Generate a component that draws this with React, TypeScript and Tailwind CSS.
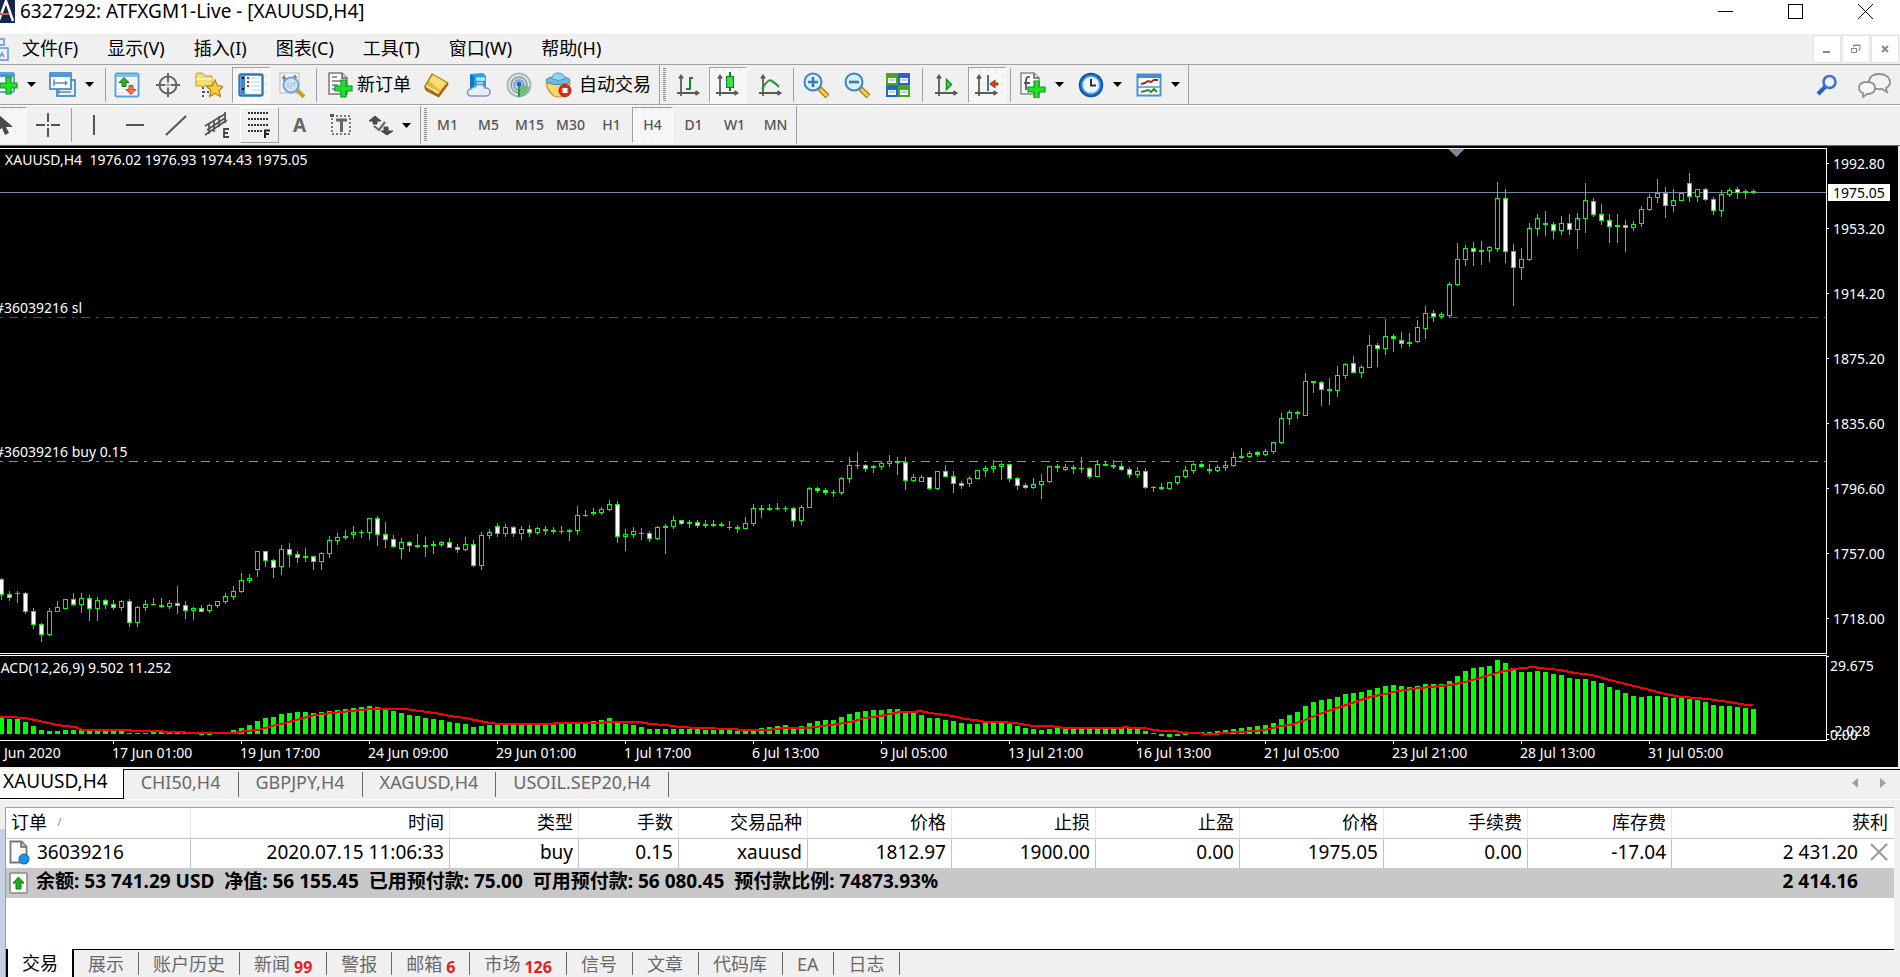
import type { ReactNode } from 'react';

// high, body top, body bottom, low, 1 = bearish (filled)
type Candle = [number, number, number, number, number];

const candles: Candle[] = [
  [578, 579, 595, 600, 1], [591, 594, 598, 601, 1], [591, 593, 594, 603, 0], [592, 593, 612, 614, 1],
  [608, 611, 625, 629, 1], [623, 624, 635, 642, 1], [608, 611, 635, 636, 0], [601, 607, 612, 612, 0],
  [599, 599, 609, 609, 0], [593, 599, 605, 606, 1], [593, 598, 605, 613, 0], [595, 598, 609, 621, 1],
  [597, 600, 609, 621, 0], [599, 600, 605, 609, 1], [600, 604, 608, 610, 1], [600, 601, 608, 611, 0],
  [599, 601, 623, 627, 1], [606, 607, 623, 627, 0], [600, 604, 608, 611, 0], [598, 604, 605, 605, 0],
  [598, 605, 607, 608, 0], [600, 603, 607, 609, 0], [586, 603, 606, 614, 1], [601, 605, 611, 619, 1],
  [607, 608, 611, 620, 0], [605, 608, 612, 612, 1], [604, 605, 611, 613, 0], [601, 601, 606, 608, 0],
  [593, 596, 602, 604, 0], [586, 591, 597, 600, 0], [573, 580, 592, 593, 0], [574, 578, 581, 583, 0],
  [551, 551, 570, 577, 0], [551, 551, 561, 567, 1], [559, 560, 568, 578, 1], [545, 549, 567, 575, 0],
  [543, 549, 555, 567, 1], [551, 554, 558, 563, 1], [548, 556, 558, 562, 0], [556, 556, 562, 570, 1],
  [552, 553, 562, 570, 0], [536, 540, 554, 558, 0], [533, 537, 541, 545, 0], [530, 536, 538, 540, 0],
  [526, 532, 535, 539, 0], [530, 532, 533, 538, 0], [518, 518, 533, 540, 0], [516, 518, 535, 546, 1],
  [522, 534, 540, 548, 1], [535, 539, 547, 548, 1], [538, 542, 549, 559, 0], [541, 542, 546, 552, 1],
  [534, 545, 547, 548, 0], [537, 545, 547, 557, 0], [541, 544, 546, 554, 0], [541, 542, 545, 547, 0],
  [538, 542, 548, 548, 1], [544, 547, 550, 553, 1], [537, 544, 550, 551, 0], [540, 544, 566, 567, 1],
  [532, 535, 566, 570, 0], [529, 532, 536, 539, 0], [523, 526, 534, 537, 1], [524, 527, 534, 537, 0],
  [526, 527, 534, 537, 1], [526, 529, 534, 540, 0], [525, 529, 533, 537, 1], [527, 528, 533, 535, 0],
  [526, 529, 531, 535, 0], [527, 530, 532, 534, 0], [526, 531, 532, 534, 0], [529, 530, 532, 541, 0],
  [506, 515, 531, 535, 0], [510, 515, 516, 517, 0], [508, 512, 514, 516, 0], [507, 509, 513, 515, 0],
  [500, 504, 510, 511, 0], [501, 504, 537, 543, 1], [529, 534, 537, 551, 0], [527, 531, 535, 538, 0],
  [528, 533, 534, 540, 0], [531, 533, 539, 542, 1], [526, 527, 539, 540, 0], [524, 526, 528, 554, 0],
  [516, 520, 527, 529, 0], [520, 520, 524, 525, 1], [520, 522, 524, 528, 0], [520, 522, 526, 528, 1],
  [520, 524, 526, 528, 0], [520, 524, 526, 527, 0], [522, 524, 526, 527, 0], [521, 527, 528, 530, 0],
  [525, 527, 529, 533, 0], [517, 523, 529, 529, 0], [504, 508, 524, 526, 0], [505, 508, 510, 518, 0],
  [504, 508, 510, 511, 0], [503, 508, 509, 510, 0], [506, 508, 509, 512, 0], [507, 508, 521, 527, 1],
  [505, 507, 521, 525, 0], [487, 488, 508, 508, 0], [487, 488, 491, 493, 1], [488, 490, 493, 495, 1],
  [490, 492, 493, 497, 0], [477, 478, 493, 495, 0], [457, 465, 479, 483, 0], [452, 465, 466, 469, 0],
  [464, 465, 469, 472, 1], [465, 466, 468, 473, 0], [461, 463, 467, 470, 0], [455, 461, 464, 467, 0],
  [457, 461, 463, 475, 0], [457, 462, 481, 490, 1], [474, 477, 481, 482, 0], [475, 477, 482, 482, 0],
  [477, 477, 489, 490, 1], [471, 471, 489, 490, 0], [465, 471, 477, 477, 1], [471, 476, 484, 493, 1],
  [481, 483, 486, 489, 1], [476, 478, 484, 487, 0], [470, 470, 479, 479, 0], [466, 468, 471, 477, 0],
  [460, 466, 469, 473, 0], [463, 464, 467, 480, 0], [464, 464, 479, 482, 1], [477, 478, 486, 490, 1],
  [483, 485, 488, 489, 1], [478, 484, 488, 489, 0], [474, 481, 485, 499, 0], [466, 466, 482, 483, 0],
  [464, 466, 468, 472, 0], [464, 467, 470, 471, 0], [465, 467, 469, 474, 0], [457, 468, 469, 473, 0],
  [467, 468, 477, 479, 1], [460, 464, 477, 477, 0], [462, 464, 466, 466, 0], [460, 465, 467, 469, 0],
  [463, 466, 470, 471, 1], [467, 469, 475, 478, 1], [467, 471, 475, 478, 0], [468, 471, 488, 489, 1],
  [486, 487, 488, 492, 0], [483, 487, 489, 490, 0], [482, 482, 489, 490, 0], [476, 476, 483, 485, 0],
  [466, 470, 477, 478, 0], [463, 464, 471, 474, 0], [463, 464, 467, 468, 1], [464, 469, 471, 474, 0],
  [465, 467, 471, 472, 0], [462, 465, 468, 471, 0], [452, 457, 466, 467, 0], [448, 456, 458, 459, 0],
  [451, 453, 457, 458, 0], [451, 452, 455, 457, 1], [449, 451, 455, 456, 0], [442, 442, 452, 454, 0],
  [413, 418, 443, 444, 0], [410, 412, 419, 425, 0], [411, 412, 414, 419, 0], [373, 381, 416, 416, 0],
  [381, 381, 383, 393, 0], [381, 382, 390, 406, 1], [378, 389, 391, 405, 0], [366, 375, 391, 397, 0],
  [363, 364, 376, 379, 0], [356, 363, 373, 373, 1], [365, 367, 373, 378, 0], [335, 345, 368, 368, 0],
  [343, 345, 349, 367, 1], [319, 336, 349, 355, 0], [334, 336, 339, 352, 1], [332, 340, 344, 348, 1],
  [333, 342, 344, 347, 0], [320, 327, 342, 343, 0], [306, 313, 329, 339, 0], [310, 313, 317, 322, 1],
  [312, 314, 317, 319, 0], [282, 284, 316, 318, 0], [243, 259, 285, 286, 0], [245, 248, 260, 266, 0],
  [242, 248, 252, 266, 1], [241, 250, 252, 265, 0], [246, 247, 251, 262, 0], [182, 198, 249, 252, 0],
  [189, 198, 252, 263, 1], [244, 251, 268, 306, 1], [248, 259, 268, 280, 0], [223, 228, 260, 261, 0],
  [214, 218, 229, 236, 0], [211, 223, 225, 236, 0], [222, 224, 231, 239, 1], [216, 223, 231, 235, 0],
  [214, 223, 230, 235, 1], [213, 218, 230, 249, 0], [183, 200, 219, 233, 0], [198, 201, 215, 217, 1],
  [204, 214, 221, 225, 1], [214, 220, 227, 243, 1], [214, 225, 227, 243, 0], [220, 225, 228, 252, 1],
  [221, 224, 228, 231, 0], [206, 209, 224, 227, 0], [194, 197, 210, 211, 0], [179, 193, 198, 203, 0],
  [187, 193, 206, 218, 1], [189, 200, 206, 212, 0], [192, 193, 201, 201, 0], [173, 183, 197, 202, 1],
  [189, 189, 197, 202, 0], [188, 189, 200, 201, 1], [197, 199, 211, 215, 1], [190, 194, 211, 217, 0],
  [188, 190, 195, 197, 0], [187, 189, 193, 199, 1], [189, 191, 193, 199, 0], [189, 191, 193, 194, 0],
];

const macd = [
  16, 15, 15, 12, 8, 4, 3, 3, 4, 4, 5, 4, 3, 3, 3, 3, 1, 1, 1, 2, 2, 1, 1, 1, 0, -1, -1, 0, 1, 4,
  6, 9, 13, 16, 17, 20, 21, 22, 22, 21, 22, 23, 24, 25, 26, 27, 28, 27, 24, 23, 21, 19, 18, 16, 15, 14, 12, 11, 10, 7,
  8, 9, 9, 9, 9, 9, 9, 9, 9, 9, 10, 10, 10, 10, 13, 14, 16, 12, 10, 9, 7, 5, 5, 5, 5, 5, 5, 5, 4, 4,
  4, 4, 3, 3, 4, 6, 7, 8, 9, 7, 8, 11, 13, 14, 14, 17, 20, 22, 23, 24, 24, 25, 25, 21, 21, 19, 16, 16, 14, 13,
  11, 10, 10, 11, 11, 11, 10, 8, 6, 5, 4, 5, 6, 6, 6, 6, 6, 6, 6, 6, 7, 6, 5, 3, 1, -2, -3, -2, -1, 1,
  2, 2, 3, 4, 5, 6, 7, 8, 9, 11, 15, 19, 22, 28, 32, 34, 35, 37, 40, 41, 42, 44, 46, 48, 49, 48, 47, 48, 50, 50,
  50, 53, 58, 63, 66, 67, 68, 74, 71, 66, 62, 62, 63, 62, 60, 59, 56, 55, 55, 53, 51, 47, 44, 41, 38, 37, 38, 38, 37, 36,
  36, 35, 34, 32, 29, 28, 28, 27, 26, 25,
];

const signal =
  '0,717 9,717 25,718 40,721 57,725 75,727 83,730 100,730 128,730 135,731 160,731 165,732 184,732 187,733 235,733 245,731 258,730 272,726 285,723 300,719 315,715 333,713 350,711 370,709 385,709 405,709 420,711 435,713 450,716 465,718 480,721 490,723 500,724 553,724 556,723 600,723 606,722 640,722 650,724 665,725 680,727 697,728 735,729 740,730 768,730 775,729 785,728 808,728 815,727 830,725 845,723 855,721 865,718 880,716 890,714 900,712 913,712 920,711 930,713 938,714 953,716 965,719 975,720 985,722 1000,722 1015,723 1033,726 1050,726 1065,728 1120,728 1125,727 1132,728 1145,728 1153,730 1165,731 1175,731 1185,733 1200,733 1204,734 1215,734 1222,733 1240,732 1255,731 1270,729 1280,726 1290,725 1300,722 1310,718 1325,712 1340,707 1355,702 1370,697 1385,694 1393,692 1405,690 1420,688 1440,686 1450,685 1465,682 1480,678 1500,672 1515,669 1533,667 1540,668 1560,670 1575,673 1592,675 1610,680 1630,685 1650,690 1665,694 1682,697 1697,698 1715,700 1735,703 1747,705 1753,705';

const times = [
  '17 Jun 01:00', '19 Jun 17:00', '24 Jun 09:00', '29 Jun 01:00', '1 Jul 17:00', '6 Jul 13:00', '9 Jul 05:00',
  '13 Jul 21:00', '16 Jul 13:00', '21 Jul 05:00', '23 Jul 21:00', '28 Jul 13:00', '31 Jul 05:00',
];

const prices = ['1992.80', '1953.20', '1914.20', '1875.20', '1835.60', '1796.60', '1757.00', '1718.00'];

const menus = ['文件(F)', '显示(V)', '插入(I)', '图表(C)', '工具(T)', '窗口(W)', '帮助(H)'];
const periods = ['M1', 'M5', 'M15', 'M30', 'H1', 'H4', 'D1', 'W1', 'MN'];
const chartTabs = ['XAUUSD,H4', 'CHI50,H4', 'GBPJPY,H4', 'XAGUSD,H4', 'USOIL.SEP20,H4'];

const terminalTabs = [
  { label: '交易' },
  { label: '展示' },
  { label: '账户历史' },
  { label: '新闻', count: 99 },
  { label: '警报' },
  { label: '邮箱', count: 6 },
  { label: '市场', count: 126 },
  { label: '信号' },
  { label: '文章' },
  { label: '代码库' },
  { label: 'EA' },
  { label: '日志' },
];

const UI = 'font-["Noto_Sans","Noto_Sans_CJK_SC",sans-serif]';
const HATCH = 'bg-[repeating-conic-gradient(#ffffff_0_25%,#f0f0f0_0_50%)] bg-[length:2px_2px]';

function Icon({ children, w = 26, className = '' }: { children: ReactNode; w?: number; className?: string }) {
  return (
    <svg width={w} height={26} viewBox={`0 0 ${w} 26`} fill="none" className={`shrink-0 ${className}`}>
      {children}
    </svg>
  );
}

/* ---------- toolbar icons ---------- */

const greenPlus = (x: number, y: number) => (
  <path
    d={`M${x + 6} ${y}h5v6h6v5h-6v6h-5v-6h-6v-5h6z`}
    fill="#22e02c"
    stroke="#0a9a18"
    strokeWidth="1.2"
  />
);

const NewChartIcon = () => (
  <Icon className="-ml-[8px]">
    <rect x="1" y="1" width="21" height="19" rx="1" fill="#fff" stroke="#3b87c8" strokeWidth="1.5" />
    <path d="M1 2h21v3H1z" fill="#4a98d8" />
    {greenPlus(8, 5)}
  </Icon>
);

const ProfilesIcon = () => (
  <Icon w={28}>
    <rect x="8" y="8" width="18" height="16" fill="#e6f1fb" stroke="#3b7fc0" strokeWidth="1.6" />
    <rect x="1" y="1" width="21" height="16" fill="#fff" stroke="#3b7fc0" strokeWidth="1.6" />
    <path d="M1 2h21v3H1z" fill="#4a98d8" />
    <path d="M5 7v7M4 11h14M16 9l2 2-2 2M10 18v4M9 20h13" stroke="#6b8aa8" strokeWidth="1.400" />
  </Icon>
);

const MarketWatchIcon = () => (
  <Icon>
    <rect x="1.500" y="1.500" width="23" height="23" rx="1.500" fill="#fff" stroke="#5a9fd6" strokeWidth="2" />
    <path d="M2 2h22v3H2z" fill="#7cc0ee" />
    <path d="M14 8h8M14 12h8M4 17h7M4 21h7" stroke="#c5d4e2" strokeDasharray="2 1" />
    <path d="M10 5.500l5 5h-3v4H8v-4H5z" fill="#2cb02c" stroke="#138013" />
    <path d="M17 22.500l-5-5h3v-4h4v4h3z" fill="#f0744a" stroke="#c63c14" />
  </Icon>
);

const DataWindowIcon = () => (
  <Icon>
    <circle cx="13" cy="13" r="8.500" stroke="#666" strokeWidth="2" />
    <path d="M13 1v9M13 16v9M1 13h9M16 13h9" stroke="#666" strokeWidth="2" />
    <path d="M10 13h6M13 10v6" stroke="#999" />
  </Icon>
);

const NavigatorIcon = () => (
  <Icon w={28}>
    <path d="M1 3q0-2 2-2h4l3 3h7v10H1z" fill="#f6dc74" stroke="#c59a25" />
    <path d="M1.500 7h15" stroke="#fff3b8" strokeWidth="2" />
    <path d="M8 15v10M8 20h6" stroke="#555" strokeWidth="2" strokeDasharray="2 2" />
    <path d="M20 8l2.600 5.700 6 .6-4.500 4.200 1.300 6-5.400-3-5.400 3 1.300-6-4.500-4.200 6-.6z" fill="#f8cd45" stroke="#b98310" strokeWidth="1.200" />
  </Icon>
);

const TerminalIcon = () => (
  <Icon>
    <rect x="1.500" y="2.500" width="23" height="21" rx="1.500" fill="#fff" stroke="#2f78bd" strokeWidth="2.400" />
    <path d="M3 4h4v18H3z" fill="#3c88cf" />
    <path d="M4 6h2M4 17h2" stroke="#111" strokeWidth="2" />
    <path d="M9 6h2M9 10h2M9 14h2" stroke="#e02020" strokeWidth="2" />
    <path d="M13 6h9M13 10h9M13 14h9M13 18h9" stroke="#dce6f4" strokeWidth="2" />
  </Icon>
);

const TesterIcon = () => (
  <Icon w={28}>
    <rect x="2" y="1" width="19" height="20" fill="#f6f6f6" stroke="#b9b9b9" />
    <path d="M6 3v9M4 6h4M11 5v6M17 3v9M15 5h4" stroke="#777" strokeWidth="1.500" />
    <path d="M19 18l7 7" stroke="#d29a22" strokeWidth="4" />
    <circle cx="13" cy="13" r="7.500" fill="#cfe6fa" fillOpacity=".9" stroke="#6fa5dc" strokeWidth="2" />
    <path d="M10 16v-5M13 17v-7M16 15v-5" stroke="#8fb3d6" />
  </Icon>
);

const NewOrderIcon = () => (
  <Icon>
    <path d="M2 1h13l5 5v16H2z" fill="#fafafa" stroke="#777" strokeWidth="1.500" />
    <path d="M15 1v5h5" fill="#ddd" stroke="#666" strokeWidth="1.500" />
    <path d="M5 5h5M5 9h11M5 13h6M5 17h4" stroke="#777" strokeWidth="1.600" />
    {greenPlus(8, 8)}
  </Icon>
);

const MetaEditorIcon = () => (
  <Icon>
    <path d="M8 2l16 9-9 13L1 14z" fill="#e8b62e" stroke="#a8700f" strokeWidth="1.200" />
    <path d="M9 3l14 8-7 7L5 9z" fill="#f9dc78" />
    <path d="M1.500 14c0 3 1 4 3 5l10 5 9-12" stroke="#a8650c" strokeWidth="2.400" />
    <path d="M2 14l13 7" stroke="#fff2b8" strokeWidth="1.500" />
  </Icon>
);

const CloudIcon = () => (
  <Icon>
    <path d="M5 2l13-1 3 3v12H5z" fill="#1da0f2" />
    <path d="M5 2l4 3v12H5z" fill="#1277c8" />
    <path d="M12 6h7v2h-7zM12 11h6" stroke="#c9ebff" strokeWidth="1.500" fill="#7fd0ff" />
    <path d="M6 24h15a4 4 0 0 0 0-8h-1a5.500 5.500 0 0 0-10-1 4.500 4.500 0 0 0-4 2 3.500 3.500 0 0 0 0 7z" fill="#e6eefa" stroke="#7e95bd" strokeWidth="1.500" />
  </Icon>
);

const SignalIcon = () => (
  <Icon>
    <circle cx="13" cy="13" r="11.500" fill="#e4eae6" stroke="#a9bab2" strokeWidth="2" />
    <circle cx="13" cy="13" r="8" fill="#d2dde0" stroke="#8fa6ae" strokeWidth="1.800" />
    <circle cx="13" cy="13" r="5" fill="#c5d6ea" stroke="#7298c2" strokeWidth="1.500" />
    <path d="M13 12l11 3q-2 9-11 10z" fill="#5fb565" fillOpacity=".75" />
    <path d="M13 13v12" stroke="#2f9a3c" strokeWidth="2" />
    <circle cx="13" cy="12" r="2.500" fill="#2465c4" />
  </Icon>
);

const AutoTradingIcon = () => (
  <Icon w={28}>
    <path d="M1 11q2 9 8 13 5 2 10 0l6-13z" fill="#f6d968" stroke="#c2952a" strokeWidth="1.200" />
    <ellipse cx="13" cy="8.500" rx="12" ry="4" fill="#6bbbe2" stroke="#3a88b4" />
    <path d="M7 7q0-6 6-6t7 6q-7 3-13 0z" fill="#93d4f0" stroke="#4a98c2" />
    <circle cx="20" cy="18.500" r="6" fill="#e0301c" stroke="#a81507" />
    <rect x="17.500" y="16" width="5" height="5" fill="#fff" />
  </Icon>
);

const Axes = () => (
  <path d="M5 4v20M1 21h21M3 6.500L5 3.500l2 3M19.500 19l3 2-3 2" stroke="#5a5a5a" strokeWidth="1.800" />
);

const BarChartIcon = () => (
  <Icon>
    <Axes />
    <path d="M14 5v13M14 6h3M10 17h4" stroke="#198a24" strokeWidth="2" />
  </Icon>
);

const CandleChartIcon = () => (
  <Icon>
    <Axes />
    <path d="M15 0v19" stroke="#11801c" strokeWidth="2" />
    <rect x="11.500" y="4.500" width="7" height="11" fill="#35e045" stroke="#11801c" />
  </Icon>
);

const LineChartIcon = () => (
  <Icon>
    <Axes />
    <path d="M4 17Q10 7 13 8.500T21 15" stroke="#2c8f36" strokeWidth="2" />
  </Icon>
);

const ZoomIcon = ({ plus = false }: { plus?: boolean }) => (
  <Icon>
    <path d="M16.500 16.500l8 8" stroke="#a77c14" strokeWidth="5.500" />
    <path d="M17 17l7 7" stroke="#f3cf4c" strokeWidth="3" />
    <circle cx="10" cy="10" r="8.500" fill="#d7f0fb" stroke="#3b84c6" strokeWidth="2" />
    <path d={plus ? 'M5 10h10M10 5v10' : 'M5 10h10'} stroke="#3a78a8" strokeWidth="2.600" />
  </Icon>
);

const TileIcon = () => (
  <Icon>
    <path d="M1 1h12v12H1zM13 13h12v12H13z" fill="#4aa816" />
    <path d="M13 1h12v12H13zM1 13h12v12H1z" fill="#2a62cf" />
    <path d="M3 6h8v5H3zM15 6h8v5h-8zM3 18h8v5H3zM15 18h8v5h-8z" fill="#f4f8ff" />
    <path d="M4 8h6M16 8h6M4 20h6M16 20h6" stroke="#a9c0dc" strokeWidth="1.500" />
  </Icon>
);

const AutoScrollIcon = () => (
  <Icon>
    <Axes />
    <path d="M12.500 7.500v10l5-5z" fill="#4be05a" stroke="#138a20" strokeWidth="1.500" />
  </Icon>
);

const ChartShiftIcon = () => (
  <Icon>
    <Axes />
    <path d="M14 3v16" stroke="#2f78b0" strokeWidth="2" />
    <path d="M16 12l5-4v3h3v2h-3v3z" fill="#d2421a" stroke="#b0300c" />
  </Icon>
);

const IndicatorsIcon = () => (
  <Icon>
    <path d="M1 1h13l5 5v16H1z" fill="#fafafa" stroke="#888" strokeWidth="1.500" />
    <path d="M14 1v5h5" fill="#ddd" stroke="#666" strokeWidth="1.500" />
    <path d="M10 5q-4-1-4 4v9M4 11h6" stroke="#555" strokeWidth="1.800" />
    {greenPlus(8, 9)}
  </Icon>
);

const ClockIcon = () => (
  <Icon>
    <circle cx="13" cy="13" r="11.500" fill="#1f78d4" stroke="#0f4f9e" strokeWidth="1.500" />
    <circle cx="13" cy="13" r="8.500" fill="#eef6fd" stroke="#7fb6ec" />
    <path d="M13 7v6.500h5" stroke="#333" strokeWidth="2" />
    <path d="M13 5.500v1M13 19.500v1M5.500 13h1M19.500 13h1" stroke="#888" />
  </Icon>
);

const TemplatesIcon = () => (
  <Icon>
    <rect x="1.500" y="2.500" width="23" height="21" fill="#fff" stroke="#4a93d2" strokeWidth="2" />
    <path d="M1 2h24v4H1z" fill="#3f8fd6" />
    <path d="M2 15h22" stroke="#4a93d2" strokeWidth="1.500" />
    <path d="M5 12l4-1 3-2 3 1 3-2h4" stroke="#9a2a18" strokeWidth="2" />
    <path d="M5 20l4-1 3-1 3 2 3-3 3 3" stroke="#25902f" strokeWidth="2" />
  </Icon>
);

/* ---------- drawing icons ---------- */

const CursorIcon = () => (
  <Icon className="-ml-[8px]">
    <path d="M5 1v19l5-4 3 7 4-2-3-6h7z" fill="#4a4a4a" />
  </Icon>
);

const CrossIcon = () => (
  <Icon>
    <path d="M13 1v9M13 16v9M1 13h9M16 13h9" stroke="#555" strokeWidth="2" />
    <path d="M12 13h2" stroke="#555" strokeWidth="2" />
  </Icon>
);

const VLineIcon = () => <Icon><path d="M13 3v20" stroke="#555" strokeWidth="2" /></Icon>;
const HLineIcon = () => <Icon><path d="M4 13h18" stroke="#555" strokeWidth="2" /></Icon>;
const TrendIcon = () => <Icon><path d="M3 23L23 4" stroke="#555" strokeWidth="2" /></Icon>;

const ChannelIcon = () => (
  <Icon>
    <path d="M1 14L21 2M1 23L23 8M5 12v10M10 9v11M15 4v11M21 0v11M3 18L21 6" stroke="#555" strokeWidth="1.800" />
    <path d="M25 17h-5v8h5M20 21h4" stroke="#444" strokeWidth="1.800" />
  </Icon>
);

const FiboIcon = () => (
  <Icon>
    <path d="M1 1h21M1 7h21M1 13h21M1 19h14" stroke="#333" strokeWidth="2" strokeDasharray="2 1" />
    <path d="M23 18.500h-5V26M18 22h4" stroke="#222" strokeWidth="2" />
  </Icon>
);

const LabelIcon = () => (
  <Icon>
    <rect x="4" y="4" width="18" height="18" stroke="#777" strokeWidth="2" strokeDasharray="2 2" />
    <path d="M8 8h11M13.500 8v12" stroke="#666" strokeWidth="3" />
    <path d="M2 2h4v3H2z" fill="#555" />
  </Icon>
);

const ArrowsIcon = () => (
  <Icon>
    <path d="M7 4l6 5H9v3H5V9H1zM19 23l-6-4h3v-4h4v4h5z" fill="#4a4a4a" stroke="#4a4a4a" />
    <path d="M6 14l5 4 6-8" stroke="#666" strokeWidth="2.200" />
  </Icon>
);

/* ---------- toolbar parts ---------- */

const Caret = ({ label, className = '' }: { label: string; className?: string }) => (
  <button aria-label={label} className={`flex h-9 w-3 items-center justify-center ${className}`}>
    <svg width="9" height="5" viewBox="0 0 9 5">
      <path d="M0 0h9L4.500 5z" fill="#000" />
    </svg>
  </button>
);

const Sep = ({ className = '' }: { className?: string }) => (
  <span className={`h-[34px] w-px shrink-0 bg-[#a0a0a0] ${className}`} />
);

const Grip = ({ className = '' }: { className?: string }) => (
  <span
    className={`ml-[3px] h-[34px] w-[3px] shrink-0 bg-[repeating-linear-gradient(#8c8c8c_0_1px,#f0f0f0_1px_2px)] ${className}`}
  />
);

interface ToolProps {
  label: string;
  children: ReactNode;
  className?: string;
  pressed?: boolean;
}

function Tool({ label, children, className = 'w-[41px]', pressed = false }: ToolProps) {
  return (
    <button
      aria-label={label}
      aria-pressed={pressed}
      className={`flex h-9 shrink-0 items-center justify-center ${
        pressed ? `border border-t-[#a0a0a0] border-r-white border-b-white border-l-[#a0a0a0] ${HATCH}` : ''
      } ${className}`}
    >
      {children}
    </button>
  );
}

function StandardToolbar() {
  return (
    <div className="flex h-10 shrink-0 items-center border-b border-[#a0a0a0]">
      <div className="flex h-full items-center border-r border-[#a0a0a0]">
        <Tool label="新图表" className="w-[25px] !justify-start"><NewChartIcon /></Tool>
        <Caret label="新图表菜单" />
        <Tool label="配置文件" className="ml-[6px] w-10"><ProfilesIcon /></Tool>
        <Caret label="配置文件菜单" />
        <Sep className="ml-[10px]" />
        <Tool label="市场报价"><MarketWatchIcon /></Tool>
        <Tool label="数据窗口"><DataWindowIcon /></Tool>
        <Tool label="导航"><NavigatorIcon /></Tool>
        <Tool label="终端" pressed className="mr-px ml-[3px] w-[38px]"><TerminalIcon /></Tool>
        <Tool label="策略测试"><TesterIcon /></Tool>
        <Sep className="mr-[10px] ml-[4px]" />
        <button className="mr-[5px] flex h-9 items-center gap-1 text-[18px]">
          <NewOrderIcon />
          新订单
        </button>
        <Tool label="MetaEditor"><MetaEditorIcon /></Tool>
        <Tool label="虚拟主机"><CloudIcon /></Tool>
        <Tool label="信号"><SignalIcon /></Tool>
        <button className="mr-[8px] ml-[6px] flex h-9 items-center gap-[6px] text-[18px]">
          <AutoTradingIcon />
          自动交易
        </button>
      </div>
      <div className="flex h-full items-center border-r border-[#a0a0a0]">
        <Grip className="mr-[2px]" />
        <Tool label="柱状图"><BarChartIcon /></Tool>
        <Tool label="阴阳烛" pressed className="w-[38px]"><CandleChartIcon /></Tool>
        <Tool label="折线图" className="ml-[3px] w-[41px]"><LineChartIcon /></Tool>
        <Sep className="mr-px ml-[2px]" />
        <Tool label="放大"><ZoomIcon plus /></Tool>
        <Tool label="缩小"><ZoomIcon /></Tool>
        <Tool label="平铺窗口"><TileIcon /></Tool>
        <Sep className="mr-[3px] ml-[4px]" />
        <Tool label="自动滚动"><AutoScrollIcon /></Tool>
        <Tool label="图表平移" pressed className="ml-px w-[38px]"><ChartShiftIcon /></Tool>
        <Sep className="mr-[3px] ml-[4px]" />
        <Tool label="技术指标" className="w-[38px]"><IndicatorsIcon /></Tool>
        <Caret label="技术指标菜单" className="ml-px" />
        <Tool label="周期" className="ml-[6px] w-10"><ClockIcon /></Tool>
        <Caret label="周期菜单" />
        <Tool label="模板" className="ml-[6px] w-10"><TemplatesIcon /></Tool>
        <Caret label="模板菜单" className="mr-[7px]" />
      </div>
      <div className="ml-auto flex items-center gap-[20px] pr-[8px]">
        <button aria-label="搜索">
          <svg width="22" height="22" viewBox="0 0 22 22" fill="none">
            <path d="M9 13l-7 7" stroke="#2c5fc4" strokeWidth="4" />
            <circle cx="13.500" cy="8" r="6" fill="#eef3fc" stroke="#3f6fd0" strokeWidth="2.500" />
          </svg>
        </button>
        <button aria-label="社区">
          <svg width="34" height="26" viewBox="0 0 34 26" fill="none" stroke="#909090" strokeWidth="1.800">
            <path d="M21 2c6 0 11 3 11 8 0 3-2 5-4 6l1 4-5-3c-8 1-13-2-13-7s4-8 10-8z" fill="#f3f3f8" />
            <path d="M9 10c5 0 8 2 8 6s-3 6-8 6l-4 3v-4c-3-1-4-3-4-5 0-4 3-6 8-6z" fill="#f6f6fb" />
          </svg>
        </button>
      </div>
    </div>
  );
}

function DrawingToolbar() {
  return (
    <div className="flex h-10 shrink-0 items-center border-t border-white pb-px">
      <div className="flex h-full items-center border-r border-[#a0a0a0]">
        <Tool label="光标" pressed className="w-[27px] !justify-start border-l-0"><CursorIcon /></Tool>
        <Tool label="十字线"><CrossIcon /></Tool>
        <Sep className="mr-px ml-[3px]" />
        <Tool label="垂直线"><VLineIcon /></Tool>
        <Tool label="水平线"><HLineIcon /></Tool>
        <Tool label="趋势线"><TrendIcon /></Tool>
        <Tool label="等距通道"><ChannelIcon /></Tool>
        <Tool
          label="斐波那契回调线"
          className="ml-[3px] w-[39px] border border-t-white border-r-[#a0a0a0] border-b-[#a0a0a0] border-l-white"
        >
          <FiboIcon />
        </Tool>
        <Tool label="文字" className="w-[41px] text-[19px] font-bold text-[#666]">A</Tool>
        <Tool label="文字标签"><LabelIcon /></Tool>
        <Tool label="箭头" className="w-[39px]"><ArrowsIcon /></Tool>
        <Caret label="箭头菜单" className="mr-[8px]" />
      </div>
      <div className="flex h-full items-center border-r border-[#a0a0a0]">
        <Grip />
        {periods.map((period) => (
          <Tool key={period} label={period} pressed={period === 'H4'} className="w-[41px] text-sm font-medium text-[#555]">
            {period}
          </Tool>
        ))}
      </div>
    </div>
  );
}

/* ---------- chart ---------- */

function OrderLine({ y, color, text }: { y: number; color: string; text: string }) {
  return (
    <>
      <path d={`M-15 ${y + 0.5}H4000`} stroke={color} strokeDasharray="9 6 3 6" />
      <text x="-5" y={y - 4} fill="#fff">{text}</text>
    </>
  );
}

function Chart() {
  return (
    <div className="mr-[2px] flex h-[621px] shrink-0 bg-black text-sm">
      <svg className="h-full min-w-0 flex-1" shapeRendering="crispEdges">
        {/* chart space starts below the toolbars */}
        <g transform="translate(0 -146)">
          <path d="M0 192.500H4000" stroke="#778899" />
          <OrderLine y={317} color="#e01010" text="#36039216 sl" />
          <OrderLine y={461} color="#32cd32" text="#36039216 buy 0.15" />
          <path d="M1448 149h16l-8 8z" fill="#778899" />

          {candles.map(([high, top, bottom, low, down], i) => {
            const x = 1 + i * 8;
            return (
              <g key={i}>
                <rect x={x} y={high} width="1" height={low - high} fill="#00ff00" />
                <rect x={x - 2} y={top} width="5" height={bottom - top} fill="#00ff00" />
                {bottom - top > 2 && (
                  <rect x={x - 1} y={top + 1} width="3" height={bottom - top - 2} fill={down ? '#fff' : '#000'} />
                )}
              </g>
            );
          })}

          {macd.map((value, i) => (
            <rect
              key={i}
              x={i * 8 - 1}
              y={value > 0 ? 734 - value : 734}
              width="5"
              height={Math.abs(value)}
              fill="#00ff00"
            />
          ))}
          <polyline points={signal} fill="none" stroke="#ff0000" strokeWidth="2" />

          <path d="M0 148.500H4000M0 653.500H4000M0 655.500H4000M0 740.500H4000" stroke="#fff" />
          <text x="5" y="165" fill="#fff" xmlSpace="preserve">{'XAUUSD,H4  1976.02 1976.93 1974.43 1975.05'}</text>
          <text x="-12" y="673" fill="#fff">MACD(12,26,9) 9.502 11.252</text>
          <text x="4" y="758" fill="#fff">Jun 2020</text>
          {times.map((time, i) => (
            <g key={time}>
              <rect x={113 + i * 128} y="741" width="1" height="3" fill="#fff" />
              <text x={112 + i * 128} y="758" fill="#fff">{time}</text>
            </g>
          ))}
        </g>
      </svg>
      <svg className="h-full w-[72px] shrink-0" shapeRendering="crispEdges">
        <g transform="translate(0 -146)">
          <path d="M.5 148V654M.5 655V741M0 656.500H3M0 734.500H3M0 739.500H3" stroke="#fff" />
          {prices.map((price, i) => (
            <g key={price}>
              <rect x="1" y={163 + i * 65} width="2" height="1" fill="#fff" />
              <text x="7" y={169 + i * 65} fill="#fff">{price}</text>
            </g>
          ))}
          <rect x="2" y="184" width="62" height="17" fill="#fff" />
          <text x="7" y="198" fill="#000">1975.05</text>
          <text x="4" y="671" fill="#fff">29.675</text>
          <text x="4" y="736" fill="#fff">-2.028</text>
          <text x="4" y="740" fill="#fff">0.00</text>
        </g>
      </svg>
    </div>
  );
}

/* ---------- terminal ---------- */

const columns = [
  { title: '时间', value: '2020.07.15 11:06:33', width: 'w-[259px]' },
  { title: '类型', value: 'buy', width: 'w-[129px]' },
  { title: '手数', value: '0.15', width: 'w-[100px]' },
  { title: '交易品种', value: 'xauusd', width: 'w-[129px]' },
  { title: '价格', value: '1812.97', width: 'w-[144px]' },
  { title: '止损', value: '1900.00', width: 'w-[144px]' },
  { title: '止盈', value: '0.00', width: 'w-[144px]' },
  { title: '价格', value: '1975.05', width: 'w-[144px]' },
  { title: '手续费', value: '0.00', width: 'w-[144px]' },
  { title: '库存费', value: '-17.04', width: 'w-[144px]' },
];

function OrdersTable() {
  return (
    <table className="w-full table-fixed border-separate border-spacing-0 whitespace-nowrap">
      <thead>
        <tr className="text-[18px] leading-7">
          <th className="h-[31px] w-[185px] border-r border-b border-r-[#e5e5e5] border-b-[#c0c0c0] p-0 pl-[5px] text-left align-top font-normal">
            <div className="flex h-7 items-center gap-[10px]">
              订单
              <svg width="5" height="8" stroke="#888"><path d="M1 8L4 0" /></svg>
            </div>
          </th>
          {columns.map(({ title, width }, i) => (
            <th
              key={i}
              className={`border-r border-b border-r-[#e5e5e5] border-b-[#c0c0c0] p-0 pr-[5px] text-right align-top font-normal ${width}`}
            >
              {title}
            </th>
          ))}
          <th className="border-b border-[#c0c0c0] p-0 pr-[6px] text-right align-top font-normal">获利</th>
        </tr>
      </thead>
      <tbody>
        <tr className="text-[19px] leading-[26px]">
          <td className="h-[29px] border-r border-[#c0c0c0] p-0 align-top">
            <div className="flex h-7 items-center gap-[7px] pl-[3px]">
              <svg width="21" height="26" viewBox="0 0 21 26" fill="none">
                <path d="M1.500 1.500h11l5 5v16h-16z" fill="#fafafa" stroke="#777" strokeWidth="1.800" />
                <path d="M12 2v5h5" fill="#ccc" stroke="#666" strokeWidth="1.500" />
                <circle cx="15" cy="19" r="5" fill="#1e90e8" stroke="#0f5fa8" />
              </svg>
              <span className="pb-[2px]">36039216</span>
            </div>
          </td>
          {columns.map(({ value }, i) => (
            <td key={i} className="border-r border-[#c0c0c0] p-0 pr-[5px] text-right align-top">{value}</td>
          ))}
          <td className="p-0 align-top">
            <div className="flex items-center justify-end gap-[12px] pr-[6px]">
              2 431.20
              <button aria-label="平仓">
                <svg width="18" height="18" viewBox="0 0 18 18" stroke="#999" strokeWidth="2">
                  <path d="M1 1l16 16M17 1L1 17" />
                </svg>
              </button>
            </div>
          </td>
        </tr>
        <tr className="bg-[#c8c8c8] text-[19px] leading-[26px] font-bold">
          <td colSpan={11} className="h-[30px] p-0 align-top">
            <div className="flex h-[30px] items-center gap-[7px] pl-[3px]">
              <svg width="20" height="22" viewBox="0 0 20 22" fill="none">
                <rect x="1" y="1" width="17" height="20" rx="1" fill="#fff" stroke="#888" strokeWidth="1.500" />
                <path d="M9.500 5l5.500 6h-3v6H7v-6H4z" fill="#24a824" stroke="#0b7a0b" />
              </svg>
              <span className="pb-1 whitespace-pre">
                {'余额: 53 741.29 USD  净值: 56 155.45  已用预付款: 75.00  可用预付款: 56 080.45  预付款比例: 74873.93%'}
              </span>
            </div>
          </td>
          <td className="p-0 pr-[36px] text-right align-top">2 414.16</td>
        </tr>
      </tbody>
    </table>
  );
}

export default function App() {
  return (
    <div className={`flex h-screen min-h-[940px] flex-col overflow-hidden bg-[#f0f0f0] text-black ${UI}`}>
      <header className="flex h-[34px] shrink-0 items-start justify-between bg-white">
        <div className="flex items-start gap-[5px]">
          <svg width="15" height="23" viewBox="0 0 15 23" fill="none">
            <path d="M0 0h15v23H0z" fill="#14264d" />
            <path d="M-1 20L6 1l7 20" stroke="#fff" strokeWidth="2.500" />
            <path d="M0 14h9" stroke="#e5563a" strokeWidth="2" />
          </svg>
          <h1 className="text-[19px] leading-[23px]">6327292: ATFXGM1-Live - [XAUUSD,H4]</h1>
        </div>
        <div className="flex gap-[54px] pt-[3px] pr-[26px]">
          <button aria-label="最小化">
            <svg width="16" height="16" stroke="#000"><path d="M0 8.500h15" /></svg>
          </button>
          <button aria-label="最大化">
            <svg width="16" height="16" fill="none" stroke="#000"><rect x=".5" y="1.500" width="14" height="14" /></svg>
          </button>
          <button aria-label="关闭">
            <svg width="16" height="16" stroke="#000"><path d="M0 1l15 15M15 1L0 16" /></svg>
          </button>
        </div>
      </header>

      <nav className="flex h-[31px] shrink-0 items-center border-b border-[#a0a0a0]">
        <svg width="9" height="26" viewBox="0 0 9 26" fill="none" stroke="#5b93dd" strokeWidth="1.500">
          <path d="M0 3h4v6H0M0 12h8v12H0M0 21l2-4 2 4" />
        </svg>
        <div className="flex gap-[29px] pb-[2px] pl-[13px] text-[18px]">
          {menus.map((menu) => (
            <button key={menu}>{menu}</button>
          ))}
        </div>
        <div className="ml-auto flex gap-px">
          <button aria-label="最小化图表" className="flex h-7 w-7 items-center justify-center border border-[#e3e3e3] bg-white">
            <svg width="10" height="10" fill="#7a8a99"><path d="M1 7h7v2H1z" /></svg>
          </button>
          <button aria-label="还原图表" className="flex h-7 w-7 items-center justify-center border border-[#e3e3e3] bg-white">
            <svg width="10" height="10" fill="none" stroke="#7a8a99">
              <path d="M2.500 3V1H9v5H7M2 1.500h7" />
              <path d="M.5 4v4.500h5V4M0 4.500h6" />
            </svg>
          </button>
          <button aria-label="关闭图表" className="mr-px flex h-7 w-7 items-center justify-center border border-[#e3e3e3] bg-white">
            <svg width="8" height="8" stroke="#7a8a99" strokeWidth="2"><path d="M1 1l6 6M7 1L1 7" /></svg>
          </button>
        </div>
      </nav>

      <StandardToolbar />
      <DrawingToolbar />
      <div className="h-px shrink-0 bg-[#696969]" />
      <Chart />

      <div className="mt-[2px] flex h-[31px] shrink-0 items-start border-t border-b border-t-black border-b-white text-[18px] leading-[24px]">
        {chartTabs.map((tab, i) =>
          i === 0 ? (
            <button
              key={tab}
              className="-mt-px flex h-[30px] items-start border-r border-b border-black bg-white pr-[15px] pl-[3px] text-[19px]"
            >
              {tab}
            </button>
          ) : (
            <button key={tab} className="mt-[2px] flex h-[25px] items-start border-r border-[#696969] px-[17px] text-[#696969]">
              <span className="-mt-[2px]">{tab}</span>
            </button>
          )
        )}
        <div className="ml-auto flex gap-[22px] pt-[8px] pr-[14px]">
          <button aria-label="向左">
            <svg width="6" height="10"><path d="M6 0v10L0 5z" fill="#a0a0a0" /></svg>
          </button>
          <button aria-label="向右">
            <svg width="6" height="10"><path d="M0 0v10l6-5z" fill="#a0a0a0" /></svg>
          </button>
        </div>
      </div>

      <main className="mt-[7px] flex min-h-0 flex-1">
        <div className="mt-[22px] w-[5px] bg-[#c4d3e3]" />
        <section className="mr-[6px] flex min-w-0 flex-1 flex-col border-t border-l border-[#a0a0a0] bg-white">
          <OrdersTable />
          <div className="mt-auto flex h-[28px] bg-[#f0f0f0] text-[18px] leading-[26px]">
            {terminalTabs.map(({ label, count }, i) =>
              i === 0 ? (
                <button key={label} className="border-r-2 border-l-2 border-black bg-white px-[14px]">
                  {label}
                </button>
              ) : (
                <button key={label} className="flex items-center border-t border-black text-[#696969]">
                  <span
                    className={`flex h-[23px] items-center border-r border-[#696969] pl-[14px] ${
                      i < 7 ? 'pr-[14px]' : 'pr-[15px]'
                    }`}
                  >
                    {label}
                    {count && <b className="mt-[7px] ml-1 text-base text-[#e81c24]">{count}</b>}
                  </span>
                </button>
              )
            )}
            <div className="flex-1 border-t border-black" />
          </div>
        </section>
      </main>
    </div>
  );
}
